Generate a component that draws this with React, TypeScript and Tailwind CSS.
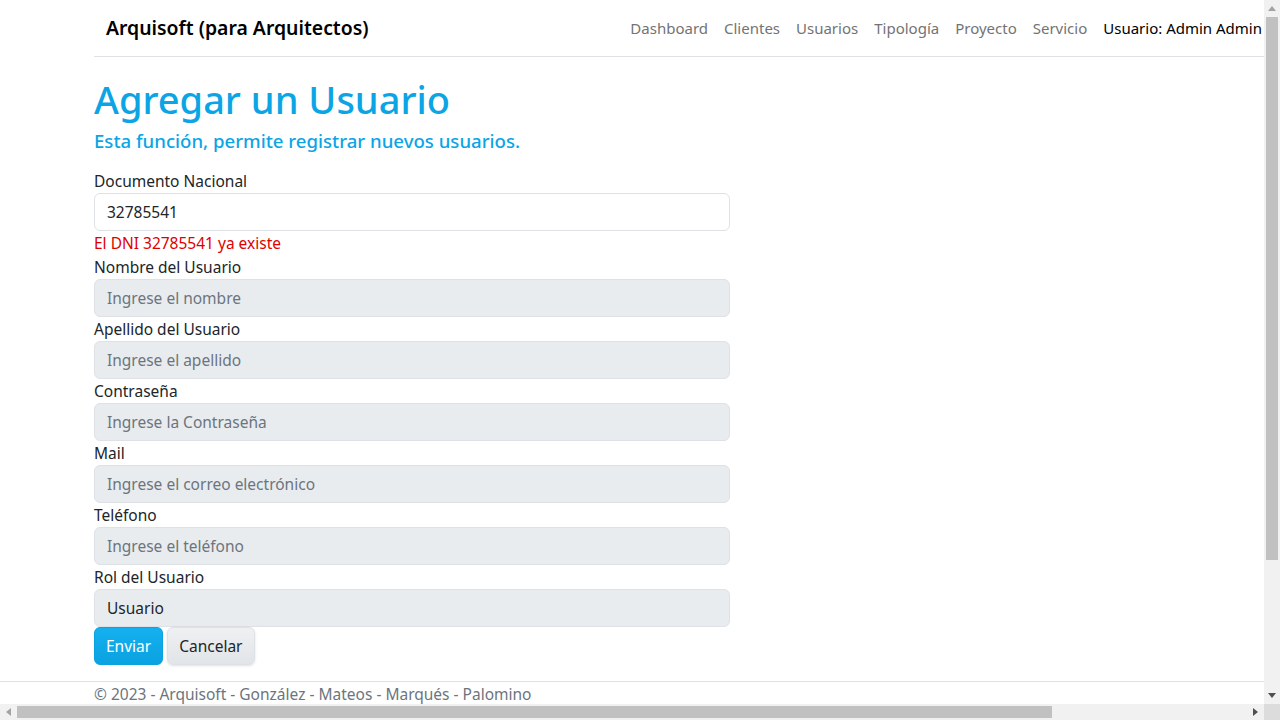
import React from 'react';

const fields = [
  { label: 'Nombre del Usuario', placeholder: 'Ingrese el nombre' },
  { label: 'Apellido del Usuario', placeholder: 'Ingrese el apellido' },
  { label: 'Contraseña', placeholder: 'Ingrese la Contraseña' },
  { label: 'Mail', placeholder: 'Ingrese el correo electrónico' },
  { label: 'Teléfono', placeholder: 'Ingrese el teléfono' },
];

const links = ['Dashboard', 'Clientes', 'Usuarios', 'Tipología', 'Proyecto', 'Servicio'];

export default function App() {
  return (
    <div
      className="h-screen w-screen flex flex-col overflow-hidden bg-white text-[#212529]"
      style={{ fontFamily: '"Noto Sans", "Open Sans", sans-serif' }}
    >
      <div className="flex flex-1 min-h-0">
        <div className="flex-1 flex flex-col overflow-hidden">
          {/* Navbar */}
          <header className="pl-[94px]">
            <div className="h-[57px] border-b border-[#dee2e6] flex items-center justify-between pl-3 pr-[2px]">
              <span className="text-[19.4px] font-semibold text-black whitespace-nowrap">Arquisoft (para Arquitectos)</span>
              <nav className="flex items-center gap-4 text-[15px] whitespace-nowrap">
                {links.map((l) => (
                  <a key={l} href="#" className="text-[#737373]">{l}</a>
                ))}
                <span className="text-black">Usuario: Admin Admin</span>
              </nav>
            </div>
          </header>

          {/* Content */}
          <main className="flex-1 pl-[94px]">
            <h1 className="mt-[18px] text-[38px] leading-[48px] font-medium text-[#0ba5e6]">Agregar un Usuario</h1>
            <h5 className="mt-[6px] text-[18.6px] leading-[24px] font-medium text-[#0ba5e6]">
              Esta función, permite registrar nuevos usuarios.
            </h5>

            <form className="mt-[16px] w-[636px] text-[15.5px]">
              <label className="block leading-[24px]">Documento Nacional</label>
              <div className="h-[38px] rounded-[6px] border border-[#dee2e6] bg-white flex items-center px-3 pt-[2px] text-[#212529]">
                32785541
              </div>
              <p className="leading-[24px] text-[#e00000]">El DNI 32785541 ya existe</p>

              {fields.map((f) => (
                <div key={f.label}>
                  <label className="block leading-[24px]">{f.label}</label>
                  <div className="h-[38px] rounded-[6px] border border-[#dee2e6] bg-[#e9ecef] flex items-center px-3 pt-[2px] text-[#6c757d]">
                    {f.placeholder}
                  </div>
                </div>
              ))}

              <label className="block leading-[24px]">Rol del Usuario</label>
              <div className="h-[38px] rounded-[6px] border border-[#dee2e6] bg-[#e9ecef] flex items-center px-3 pt-[2px] text-[#212529]">
                Usuario
              </div>

              <div className="flex gap-1">
                <button
                  type="button"
                  className="h-[38px] px-[11px] pt-[2px] rounded-[6px] text-white bg-gradient-to-b from-[#14b0ef] to-[#0aa2e1] border border-[#0aa2e1]"
                >
                  Enviar
                </button>
                <button
                  type="button"
                  className="h-[38px] px-[11px] pt-[2px] rounded-[6px] text-[#212529] bg-gradient-to-b from-[#eef0f2] to-[#e2e5e8] border border-[#dee2e6] shadow-sm"
                >
                  Cancelar
                </button>
              </div>
            </form>
          </main>

          {/* Footer */}
          <footer className="h-[23px] border-t border-[#dee2e6] pl-[94px] overflow-hidden shrink-0">
            <p className="leading-[24px] text-[15.5px] text-[#6c757d] whitespace-nowrap">
              © 2023 - Arquisoft - González - Mateos - Marqués - Palomino
            </p>
          </footer>
        </div>

        {/* Vertical scrollbar */}
        <div className="w-4 bg-[#f1f1f1] flex flex-col items-center shrink-0">
          <div className="h-[17px] flex items-center justify-center">
            <svg width="8" height="5" viewBox="0 0 8 5"><path d="M0 5 L4 0 L8 5 Z" fill="#a3a3a3" /></svg>
          </div>
          <div className="w-[12px] h-[543px] bg-[#c1c1c1]" />
          <div className="flex-1" />
          <div className="h-[17px] flex items-center justify-center">
            <svg width="8" height="5" viewBox="0 0 8 5"><path d="M0 0 L8 0 L4 5 Z" fill="#505050" /></svg>
          </div>
        </div>
      </div>

      {/* Horizontal scrollbar */}
      <div className="h-4 flex bg-[#f1f1f1] shrink-0">
        <div className="w-[17px] flex items-center justify-center">
          <svg width="5" height="8" viewBox="0 0 5 8"><path d="M5 0 L5 8 L0 4 Z" fill="#a3a3a3" /></svg>
        </div>
        <div className="flex-1 flex items-center">
          <div className="w-[1035px] h-[12px] bg-[#c1c1c1]" />
        </div>
        <div className="w-[17px] flex items-center justify-center">
          <svg width="5" height="8" viewBox="0 0 5 8"><path d="M0 0 L5 4 L0 8 Z" fill="#505050" /></svg>
        </div>
        <div className="w-4 bg-[#dcdcdc]" />
      </div>
    </div>
  );
}
